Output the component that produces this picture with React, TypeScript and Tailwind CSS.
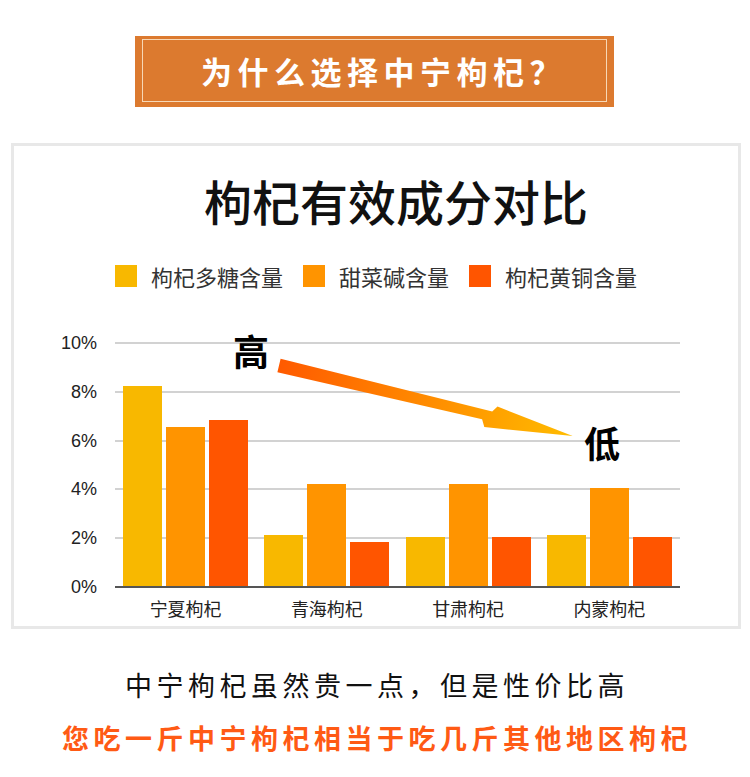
import React from 'react';

interface Region {
  name: string;
  values: [number, number, number];
}

const regions: Region[] = [
  { name: '宁夏枸杞', values: [8.2, 6.5, 6.8] },
  { name: '青海枸杞', values: [2.1, 4.2, 1.8] },
  { name: '甘肃枸杞', values: [2.0, 4.2, 2.0] },
  { name: '内蒙枸杞', values: [2.1, 4.0, 2.0] },
];

const barColors = ['bg-[#f8b800]', 'bg-[#ff9400]', 'bg-[#ff5500]'];

const legend = [
  { label: '枸杞多糖含量', color: 'bg-[#f8b800]' },
  { label: '甜菜碱含量', color: 'bg-[#ff9400]' },
  { label: '枸杞黄铜含量', color: 'bg-[#ff5500]' },
];

const ticks = ['10%', '8%', '6%', '4%', '2%', '0%'];

const cjk = "font-['Noto_Sans_CJK_SC',sans-serif]";

// slim gradient arrow from 高 down to 低
const TrendArrow: React.FC = () => (
  <svg className="absolute left-0 top-0 pointer-events-none" width="565" height="244" viewBox="0 0 565 244">
    <defs>
      <linearGradient id="arrowGrad" gradientUnits="userSpaceOnUse" x1="164" y1="23" x2="458" y2="94">
        <stop offset="0" stopColor="#ff5a00" />
        <stop offset="1" stopColor="#ffbc00" />
      </linearGradient>
    </defs>
    <polygon
      points="165.6,16.7 377.2,69.5 382.5,64.6 457.7,93.9 369.3,85.1 367.1,77.3 162.4,30.3"
      fill="url(#arrowGrad)"
    />
  </svg>
);

const App: React.FC = () => {
  return (
    <div className={`w-[750px] h-[777px] bg-white flex flex-col ${cjk}`}>
      {/* header banner */}
      <div className="mt-[36px] ml-[135px] w-[479px] h-[71px] bg-[#dc7a2f] pt-[3px] pb-[5px] px-[7px]">
        <div className="h-full border border-[#f7d8b6] flex items-center justify-center">
          <span className="text-white text-[31px] font-bold tracking-[5.5px] pl-[18px] leading-none">
            为什么选择中宁枸杞？
          </span>
        </div>
      </div>

      {/* chart card */}
      <div className="mt-[36px] ml-[11px] w-[730px] h-[486px] border-[3px] border-[#e8e8e8] flex flex-col">
        <h1 className="mt-[24px] pl-[40px] text-center text-[48px] leading-[60px] font-medium text-[#111]">
          枸杞有效成分对比
        </h1>

        <div className="mt-[34px] flex items-center justify-center gap-[20px]">
          {legend.map((item) => (
            <div key={item.label} className="flex items-center gap-[14px]">
              <span className={`w-[22px] h-[22px] ${item.color}`} />
              <span className="text-[22px] leading-[24px] text-[#333]">{item.label}</span>
            </div>
          ))}
        </div>

        <div className="mt-[54px] flex items-start">
          <div className="w-[83px] -mt-[9px] h-[264px] flex flex-col justify-between items-end font-['Liberation_Sans',sans-serif] text-[18px] text-[#222]">
            {ticks.map((t) => (
              <span key={t} className="h-[20px] leading-[20px]">{t}</span>
            ))}
          </div>

          <div className="ml-[18px] w-[565px] flex flex-col">
            <div className="relative h-[246px]">
              <div className="absolute inset-0 flex flex-col justify-between">
                <div className="h-[2px] bg-[#d2d2d2]" />
                <div className="h-[2px] bg-[#d2d2d2]" />
                <div className="h-[2px] bg-[#d2d2d2]" />
                <div className="h-[2px] bg-[#d2d2d2]" />
                <div className="h-[2px] bg-[#d2d2d2]" />
                <div className="h-[2px] bg-[#555]" />
              </div>
              <div className="relative h-full flex items-end pb-[2px]">
                {regions.map((r) => (
                  <div key={r.name} className="flex-1 h-full flex items-end justify-center gap-[4px]">
                    {r.values.map((v, i) => (
                      <div key={i} className={`w-[39px] ${barColors[i]}`} style={{ height: `${v * 10}%` }} />
                    ))}
                  </div>
                ))}
              </div>
              <TrendArrow />
              <span className="absolute left-[118px] top-[-12px] text-[36px] leading-[40px] font-bold text-black">高</span>
              <span className="absolute left-[469px] top-[80px] text-[36px] leading-[40px] font-bold text-black">低</span>
            </div>
            <div className="mt-[8px] flex">
              {regions.map((r) => (
                <span key={r.name} className="flex-1 text-center text-[18px] leading-[24px] text-[#222]">
                  {r.name}
                </span>
              ))}
            </div>
          </div>
        </div>
      </div>

      {/* bottom copy */}
      <p className="mt-[38px] text-center text-[27px] leading-[36px] tracking-[4.5px] pl-[4px] text-[#111]">
        中宁枸杞虽然贵一点，但是性价比高
      </p>
      <p className="mt-[17px] text-center text-[27px] leading-[36px] tracking-[4.5px] pl-[4px] font-bold text-[#ff5a14]">
        您吃一斤中宁枸杞相当于吃几斤其他地区枸杞
      </p>
    </div>
  );
};

export default App;
